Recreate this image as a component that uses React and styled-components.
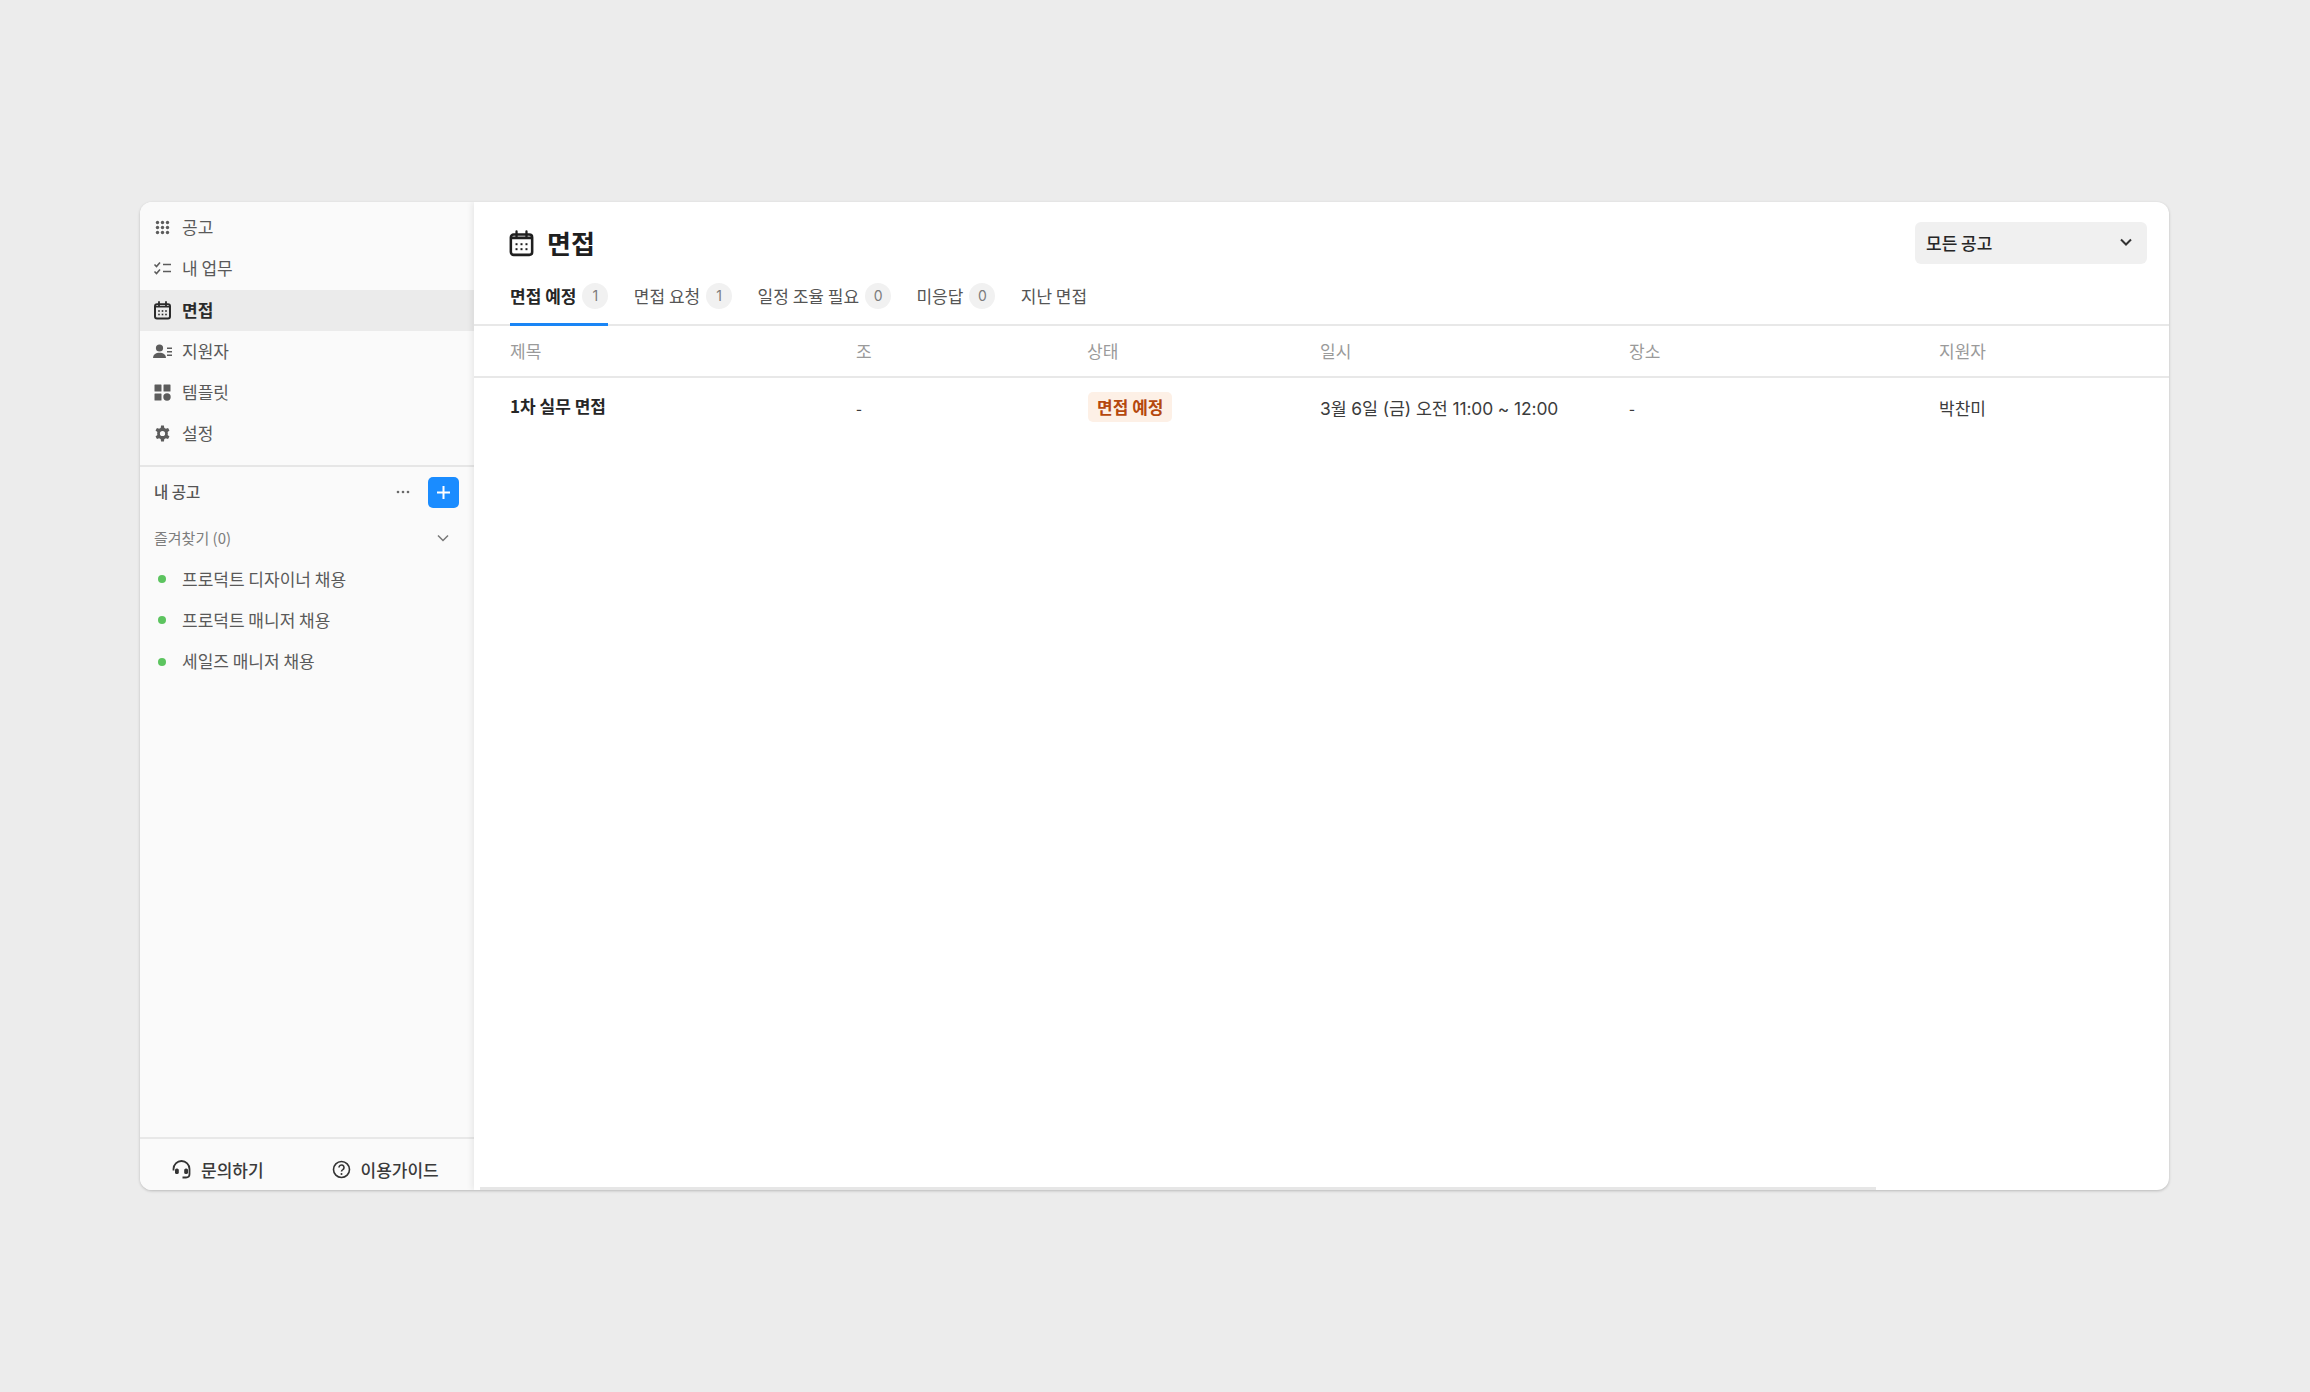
import styled, { createGlobalStyle } from "styled-components";

const GlobalStyle = createGlobalStyle`
  html, body {
    margin: 0;
    background: #ececec;
    font-family: "Noto Sans CJK KR", "Noto Sans", sans-serif;
  }
`;

const Page = styled.div`
  width: 2310px;
  height: 1392px;
  padding: 202px 141px 202px 140px;
  box-sizing: border-box;
`;
const Window = styled.div`
  display: flex;
  height: 988px;
  border-radius: 12px;
  overflow: hidden;
  background: #fff;
  box-shadow: 0 1px 3px rgba(0,0,0,.22);
`;
const Sidebar = styled.aside`
  display: flex;
  flex-direction: column;
  width: 334px;
  flex-shrink: 0;
  background: #fafafa;
  padding-top: 5px;
  box-sizing: border-box;
`;
const NavList = styled.nav`
  display: flex;
  flex-direction: column;
  padding-bottom: 10px;
  border-bottom: 2px solid #e6e6e6;
`;
const Label = styled.span`
  margin-top: -2px;
`;
const NavRow = styled.div`
  display: flex;
  align-items: center;
  gap: 10px;
  height: 41.25px;
  padding-left: 13px;
  font-size: 17px;
  font-weight: ${p => p.$active ? 700 : 400};
  color: ${p => p.$active ? "#2b2b2b" : "#595959"};
  background: ${p => p.$active ? "#ebebeb" : "transparent"};
  svg { width: 19px; height: 19px; flex-shrink: 0; }
`;
const SectionHead = styled.div`
  display: flex;
  align-items: center;
  justify-content: space-between;
  height: 31px;
  margin-top: 10px;
  padding: 0 15px 0 14px;
  font-size: 15.5px;
  font-weight: 500;
  color: #555;
`;
const SectionTools = styled.div`
  display: flex;
  align-items: center;
  gap: 17px;
`;
const PlusButton = styled.div`
  display: flex;
  align-items: center;
  justify-content: center;
  width: 31px;
  height: 31px;
  border-radius: 5px;
  background: #1a8cff;
`;
const FavRow = styled.div`
  display: flex;
  align-items: center;
  justify-content: space-between;
  height: 31px;
  margin-top: 15px;
  padding: 0 23px 0 14px;
  font-size: 15px;
  color: #7d7d7d;
`;
const JobList = styled.div`
  display: flex;
  flex-direction: column;
  margin-top: 5px;
`;
const JobRow = styled.div`
  display: flex;
  align-items: center;
  height: 41.25px;
  padding-left: 18px;
  gap: 16px;
  font-size: 17px;
  color: #595959;
`;
const Dot = styled.span`
  width: 8px;
  height: 8px;
  border-radius: 50%;
  background: #5cc45f;
`;
const SideFooter = styled.div`
  display: flex;
  align-items: center;
  margin-top: auto;
  height: 51px;
  padding: 0 0 0 32px;
  gap: 68px;
  border-top: 2px solid #e8e8e8;
`;
const FooterLink = styled.div`
  display: flex;
  align-items: center;
  gap: 10px;
  font-size: 17px;
  font-weight: 500;
  color: #3a3a3a;
  padding-top: 10px;
`;
const Main = styled.main`
  position: relative;
  flex: 1;
  min-width: 0;
  box-shadow: -2px 0 6px rgba(0,0,0,.08);
`;
const TopBar = styled.div`
  display: flex;
  align-items: center;
  justify-content: space-between;
  height: 42px;
  margin-top: 20px;
  padding: 0 22px 0 34px;
`;
const Title = styled.h1`
  display: flex;
  align-items: center;
  gap: 12px;
  margin: 0;
  font-size: 26px;
  font-weight: 700;
  color: #1f1f1f;
`;
const Select = styled.div`
  display: flex;
  align-items: center;
  justify-content: space-between;
  width: 232px;
  height: 42px;
  box-sizing: border-box;
  padding: 0 13px 2px 11px;
  border-radius: 6px;
  background: #f0f0f0;
  font-size: 17px;
  font-weight: 500;
  color: #262626;
`;
const Tabs = styled.div`
  display: flex;
  gap: 25.4px;
  height: 62px;
  padding-left: 36px;
  box-sizing: border-box;
  border-bottom: 2px solid #e8e8e8;
`;
const Tab = styled.div`
  display: flex;
  align-items: center;
  gap: 6px;
  height: 62px;
  padding-top: 4px;
  box-sizing: border-box;
  font-size: 17px;
  font-weight: ${p => p.$active ? 600 : 400};
  color: ${p => p.$active ? "#262626" : "#555"};
  border-bottom: 3px solid ${p => p.$active ? "#1a85f5" : "transparent"};
`;
const Count = styled.span`
  display: flex;
  align-items: center;
  justify-content: center;
  width: 26px;
  height: 26px;
  border-radius: 50%;
  background: #f1f1f1;
  font-family: Inter, sans-serif;
  font-size: 14px;
  font-weight: 400;
  color: #7c7c7c;
`;
const cols = "346px 231px 233px 309px 310px 1fr";
const HeadRow = styled.div`
  display: grid;
  grid-template-columns: ${cols};
  align-items: center;
  height: 52px;
  padding: 0 0 2px 36px;
  box-sizing: border-box;
  border-bottom: 2px solid #e8e8e8;
  font-size: 17px;
  color: #9a9a9a;
`;
const BodyRow = styled.div`
  display: grid;
  grid-template-columns: ${cols};
  align-items: center;
  height: 58px;
  padding-left: 36px;
  font-size: 17px;
  color: #3c3c3c;
`;
const RowTitle = styled.div`
  font-weight: 700;
  color: #262626;
  margin-top: -3px;
`;
const Status = styled.span`
  display: inline-block;
  margin-left: 1px;
  padding: 2px 9px 3px;
  border-radius: 5px;
  background: #fdf0e6;
  font-size: 17px;
  font-weight: 600;
  color: #b5480e;
`;
const DateText = styled.div`
  font-family: Inter, "Noto Sans CJK KR", sans-serif;
  font-size: 17.4px;
  letter-spacing: -0.1px;
  white-space: nowrap;
`;
const ScrollBar = styled.div`
  position: absolute;
  left: 6px;
  bottom: 0;
  width: 1396px;
  height: 3px;
  background: #e6e6e6;
`;

const GridIcon = () => (
  <svg viewBox="0 0 19 19" fill="#5c5c5c">
    {[4.5, 9.5, 14.5].map(x => [4.5, 9.5, 14.5].map(y => <circle key={`${x}-${y}`} cx={x} cy={y} r="1.7" />))}
  </svg>
);
const TaskIcon = () => (
  <svg viewBox="0 0 19 19" fill="none" stroke="#5c5c5c" strokeWidth="1.6">
    <path d="M1.5 5.5l2 2 3.5-4M1.5 12.5l2 2 3.5-4M10 5.5h8M10 12.5h8" />
  </svg>
);
const CalendarIcon = ({ color = "#2b2b2b" }) => (
  <svg viewBox="0 0 19 19" fill="none">
    <rect x="2" y="3.2" width="15" height="14.3" rx="2" stroke={color} strokeWidth="2" />
    <path d="M6 1v4M13 1v4" stroke={color} strokeWidth="1.8" strokeLinecap="round" />
    <path d="M2 5h15v1.5H2z" fill={color} />
    {[6, 9.5, 13].map(x => [10, 13.5].map(y => <rect key={`${x}-${y}`} x={x - 0.8} y={y - 0.8} width="1.6" height="1.6" fill={color} />))}
  </svg>
);
const ApplicantIcon = () => (
  <svg viewBox="0 0 19 19" fill="#5c5c5c">
    <circle cx="6.5" cy="6" r="3.6" />
    <path d="M0 16c.3-3.6 2.8-5.2 6.5-5.2s6.200 1.600 6.500 5.200z" />
    <path d="M14 5.500h5v1.500h-5zM14 9h5v1.500h-5zM14 12.500h5v1.500h-5z" />
  </svg>
);
const TemplateIcon = () => (
  <svg viewBox="0 0 19 19" fill="#5c5c5c">
    <rect x="1.500" y="1.500" width="7" height="7" rx=".6" />
    <rect x="10.500" y="1.500" width="7" height="7" rx=".6" />
    <rect x="1.500" y="10.500" width="7" height="7" rx=".6" />
    <circle cx="14" cy="14" r="3.700" />
  </svg>
);
const GearIcon = () => (
  <svg viewBox="0 0 24 24" fill="#5c5c5c">
    <path fillRule="evenodd" d="M13.800 2h-3.600l-.5 2.900c-.7.300-1.300.6-1.900 1.100L5 5 3.200 8.100l2.300 1.900a7.600 7.600 0 0 0 0 4L3.200 15.900 5 19l2.800-1c.6.500 1.200.8 1.900 1.100l.5 2.900h3.600l.5-2.900c.7-.3 1.300-.6 1.900-1.100l2.800 1 1.800-3.100-2.300-1.900a7.600 7.600 0 0 0 0-4l2.300-1.900L19 5l-2.800 1c-.6-.5-1.200-.8-1.900-1.100zM12 8.700a3.300 3.300 0 1 1 0 6.600 3.300 3.300 0 0 1 0-6.600z" />
  </svg>
);
const Chevron = ({ color, width = 2 }) => (
  <svg width="16" height="16" viewBox="0 0 16 16" fill="none" stroke={color} strokeWidth={width}>
    <path d="M3 5.500l5 5 5-5" />
  </svg>
);
const MoreIcon = () => (
  <svg width="16" height="16" viewBox="0 0 16 16" fill="#6a6a6a">
    <circle cx="3" cy="8" r="1.300" />
    <circle cx="8" cy="8" r="1.300" />
    <circle cx="13" cy="8" r="1.300" />
  </svg>
);
const PlusIcon = () => (
  <svg width="15" height="15" viewBox="0 0 15 15" stroke="#fff" strokeWidth="2">
    <path d="M7.500 1v13M1 7.500h13" />
  </svg>
);
const HeadsetIcon = () => (
  <svg width="19" height="19" viewBox="0 0 19 19" fill="none" stroke="#333" strokeWidth="1.800">
    <path d="M1.500 10.500V9a8 8 0 0 1 16 0v5c0 2.200-1.200 3.500-3.500 3.500h-3.500" />
    <rect x="3" y="8.500" width="3.800" height="5.500" rx="1.600" fill="#333" stroke="none" />
    <rect x="12.200" y="8.500" width="3.800" height="5.500" rx="1.600" fill="#333" stroke="none" />
  </svg>
);
const HelpIcon = () => (
  <svg width="19" height="19" viewBox="0 0 19 19" fill="none" stroke="#333" strokeWidth="1.600">
    <circle cx="9.500" cy="9.500" r="8" />
    <path d="M7 7.500a2.500 2.500 0 1 1 3.800 2.100c-.9.500-1.300 1-1.300 2" />
    <circle cx="9.500" cy="14" r="1" fill="#333" stroke="none" />
  </svg>
);

const navItems = [
  { label: "공고", icon: <GridIcon /> },
  { label: "내 업무", icon: <TaskIcon /> },
  { label: "면접", icon: <CalendarIcon />, active: true },
  { label: "지원자", icon: <ApplicantIcon /> },
  { label: "템플릿", icon: <TemplateIcon /> },
  { label: "설정", icon: <GearIcon /> },
];
const jobs = ["프로덕트 디자이너 채용", "프로덕트 매니저 채용", "세일즈 매니저 채용"];
const tabs = [
  { label: "면접 예정", count: 1, active: true },
  { label: "면접 요청", count: 1 },
  { label: "일정 조율 필요", count: 0 },
  { label: "미응답", count: 0 },
  { label: "지난 면접" },
];
const headers = ["제목", "조", "상태", "일시", "장소", "지원자"];

export default function App() {
  return (
    <Page>
      <GlobalStyle />
      <Window>
        <Sidebar>
          <NavList>
            {navItems.map(item => (
              <NavRow key={item.label} $active={item.active}>
                {item.icon}
                <Label>{item.label}</Label>
              </NavRow>
            ))}
          </NavList>
          <SectionHead>
            <Label>내 공고</Label>
            <SectionTools>
              <MoreIcon />
              <PlusButton><PlusIcon /></PlusButton>
            </SectionTools>
          </SectionHead>
          <FavRow>
            <Label>즐겨찾기 (0)</Label>
            <Chevron color="#777" width={1.5} />
          </FavRow>
          <JobList>
            {jobs.map(job => (
              <JobRow key={job}><Dot /><Label>{job}</Label></JobRow>
            ))}
          </JobList>
          <SideFooter>
            <FooterLink><HeadsetIcon />문의하기</FooterLink>
            <FooterLink><HelpIcon />이용가이드</FooterLink>
          </SideFooter>
        </Sidebar>
        <Main>
          <TopBar>
            <Title>
              <svg width="27" height="27" viewBox="0 0 19 19" fill="none"><g><rect x="2" y="3.200" width="15" height="14.300" rx="2" stroke="#1f1f1f" strokeWidth="1.800" /><path d="M6 1v4M13 1v4" stroke="#1f1f1f" strokeWidth="1.600" strokeLinecap="round" /><path d="M2 4.500h15v2H2z" fill="#1f1f1f" />{[6, 9.500, 13].map(x => [10, 13.500].map(y => <rect key={`${x}-${y}`} x={x - 0.700} y={y - 0.700} width="1.400" height="1.400" fill="#1f1f1f" />))}</g></svg>
              <Label>면접</Label>
            </Title>
            <Select>
              모든 공고
              <Chevron color="#333" />
            </Select>
          </TopBar>
          <Tabs>
            {tabs.map(tab => (
              <Tab key={tab.label} $active={tab.active}>
                {tab.label}
                {tab.count !== undefined && <Count>{tab.count}</Count>}
              </Tab>
            ))}
          </Tabs>
          <HeadRow>
            {headers.map(h => <div key={h}>{h}</div>)}
          </HeadRow>
          <BodyRow>
            <RowTitle>1차 실무 면접</RowTitle>
            <div>-</div>
            <div><Status>면접 예정</Status></div>
            <DateText>3월 6일 (금) 오전 11:00 ~ 12:00</DateText>
            <div>-</div>
            <div>박찬미</div>
          </BodyRow>
          <ScrollBar />
        </Main>
      </Window>
    </Page>
  );
}
